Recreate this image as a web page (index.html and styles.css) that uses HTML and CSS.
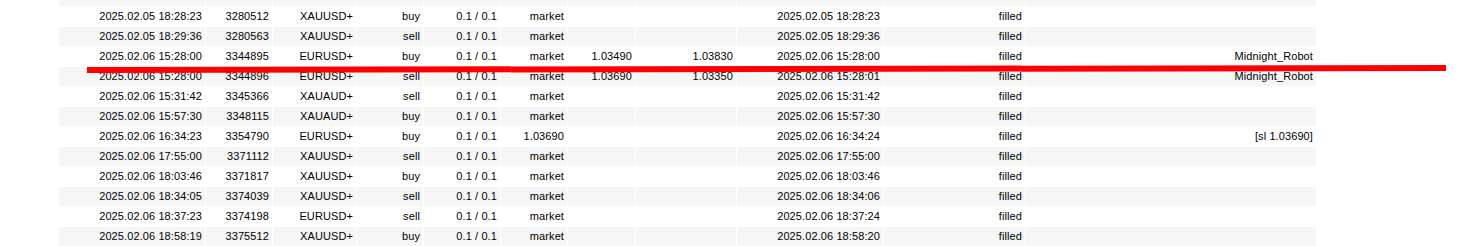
FILE: index.html
```html
<!DOCTYPE html>
<html>
<head>
<meta charset="utf-8">
<link rel="stylesheet" href="styles.css">
</head>
<body>
<div class="view">
  <div class="grid">
    <div class="row alt"><div class="c">2025.02.05 17:47:00</div><div class="c">3279404</div><div class="c">XAUUSD+</div><div class="c">sell</div><div class="c">0.1 / 0.1</div><div class="c">market</div><div class="c"></div><div class="c"></div><div class="c">2025.02.05 17:47:00</div><div class="c">filled</div><div class="c last"></div></div>
    <div class="row"><div class="c">2025.02.05 18:28:23</div><div class="c">3280512</div><div class="c">XAUUSD+</div><div class="c">buy</div><div class="c">0.1 / 0.1</div><div class="c">market</div><div class="c"></div><div class="c"></div><div class="c">2025.02.05 18:28:23</div><div class="c">filled</div><div class="c last"></div></div>
    <div class="row alt"><div class="c">2025.02.05 18:29:36</div><div class="c">3280563</div><div class="c">XAUUSD+</div><div class="c">sell</div><div class="c">0.1 / 0.1</div><div class="c">market</div><div class="c"></div><div class="c"></div><div class="c">2025.02.05 18:29:36</div><div class="c">filled</div><div class="c last"></div></div>
    <div class="row"><div class="c">2025.02.06 15:28:00</div><div class="c">3344895</div><div class="c">EURUSD+</div><div class="c">buy</div><div class="c">0.1 / 0.1</div><div class="c">market</div><div class="c">1.03490</div><div class="c">1.03830</div><div class="c">2025.02.06 15:28:00</div><div class="c">filled</div><div class="c last">Midnight_Robot</div></div>
    <div class="row alt"><div class="c">2025.02.06 15:28:00</div><div class="c">3344896</div><div class="c">EURUSD+</div><div class="c">sell</div><div class="c">0.1 / 0.1</div><div class="c">market</div><div class="c">1.03690</div><div class="c">1.03350</div><div class="c">2025.02.06 15:28:01</div><div class="c">filled</div><div class="c last">Midnight_Robot</div></div>
    <div class="row"><div class="c">2025.02.06 15:31:42</div><div class="c">3345366</div><div class="c">XAUAUD+</div><div class="c">sell</div><div class="c">0.1 / 0.1</div><div class="c">market</div><div class="c"></div><div class="c"></div><div class="c">2025.02.06 15:31:42</div><div class="c">filled</div><div class="c last"></div></div>
    <div class="row alt"><div class="c">2025.02.06 15:57:30</div><div class="c">3348115</div><div class="c">XAUAUD+</div><div class="c">buy</div><div class="c">0.1 / 0.1</div><div class="c">market</div><div class="c"></div><div class="c"></div><div class="c">2025.02.06 15:57:30</div><div class="c">filled</div><div class="c last"></div></div>
    <div class="row"><div class="c">2025.02.06 16:34:23</div><div class="c">3354790</div><div class="c">EURUSD+</div><div class="c">buy</div><div class="c">0.1 / 0.1</div><div class="c">1.03690</div><div class="c"></div><div class="c"></div><div class="c">2025.02.06 16:34:24</div><div class="c">filled</div><div class="c last">[sl 1.03690]</div></div>
    <div class="row alt"><div class="c">2025.02.06 17:55:00</div><div class="c">3371112</div><div class="c">XAUUSD+</div><div class="c">sell</div><div class="c">0.1 / 0.1</div><div class="c">market</div><div class="c"></div><div class="c"></div><div class="c">2025.02.06 17:55:00</div><div class="c">filled</div><div class="c last"></div></div>
    <div class="row"><div class="c">2025.02.06 18:03:46</div><div class="c">3371817</div><div class="c">XAUUSD+</div><div class="c">buy</div><div class="c">0.1 / 0.1</div><div class="c">market</div><div class="c"></div><div class="c"></div><div class="c">2025.02.06 18:03:46</div><div class="c">filled</div><div class="c last"></div></div>
    <div class="row alt"><div class="c">2025.02.06 18:34:05</div><div class="c">3374039</div><div class="c">XAUUSD+</div><div class="c">sell</div><div class="c">0.1 / 0.1</div><div class="c">market</div><div class="c"></div><div class="c"></div><div class="c">2025.02.06 18:34:06</div><div class="c">filled</div><div class="c last"></div></div>
    <div class="row"><div class="c">2025.02.06 18:37:23</div><div class="c">3374198</div><div class="c">EURUSD+</div><div class="c">sell</div><div class="c">0.1 / 0.1</div><div class="c">market</div><div class="c"></div><div class="c"></div><div class="c">2025.02.06 18:37:24</div><div class="c">filled</div><div class="c last"></div></div>
    <div class="row alt"><div class="c">2025.02.06 18:58:19</div><div class="c">3375512</div><div class="c">XAUUSD+</div><div class="c">buy</div><div class="c">0.1 / 0.1</div><div class="c">market</div><div class="c"></div><div class="c"></div><div class="c">2025.02.06 18:58:20</div><div class="c">filled</div><div class="c last"></div></div>
  </div>
  <svg class="mark" width="1473" height="246" viewBox="0 0 1473 246"><line x1="87" y1="70" x2="1446" y2="68" stroke="#ff0000" stroke-width="6"/></svg>
</div>
</body>
</html>
```
FILE: styles.css
```css
html, body {
  margin: 0;
  padding: 0;
  background: #ffffff;
}
.view {
  position: relative;
  width: 1473px;
  height: 246px;
  overflow: hidden;
  padding-left: 59px;
  box-sizing: border-box;
}
.grid {
  margin-top: -13px;
  display: flex;
  flex-direction: column;
  align-items: flex-start;
}
.row {
  display: grid;
  grid-template-columns: 147px 67px 84px 67px 77px 67px 68px 101px 147px 142px 290px;
  background: #ffffff;
}
.row.alt {
  background: #f6f6f6;
}
.c {
  box-sizing: border-box;
  height: 20px;
  line-height: 19px;
  border-right: 1px solid #ffffff;
  border-bottom: 1px solid #ffffff;
  padding-right: 3px;
  text-align: right;
  white-space: nowrap;
  overflow: hidden;
  font-family: "Liberation Sans", Arial, sans-serif;
  font-size: 11px;
  letter-spacing: 0.1px;
  color: #000000;
}
.c.last {
  border-right: none;
}
.mark {
  position: absolute;
  left: 0;
  top: 0;
  pointer-events: none;
}
```
